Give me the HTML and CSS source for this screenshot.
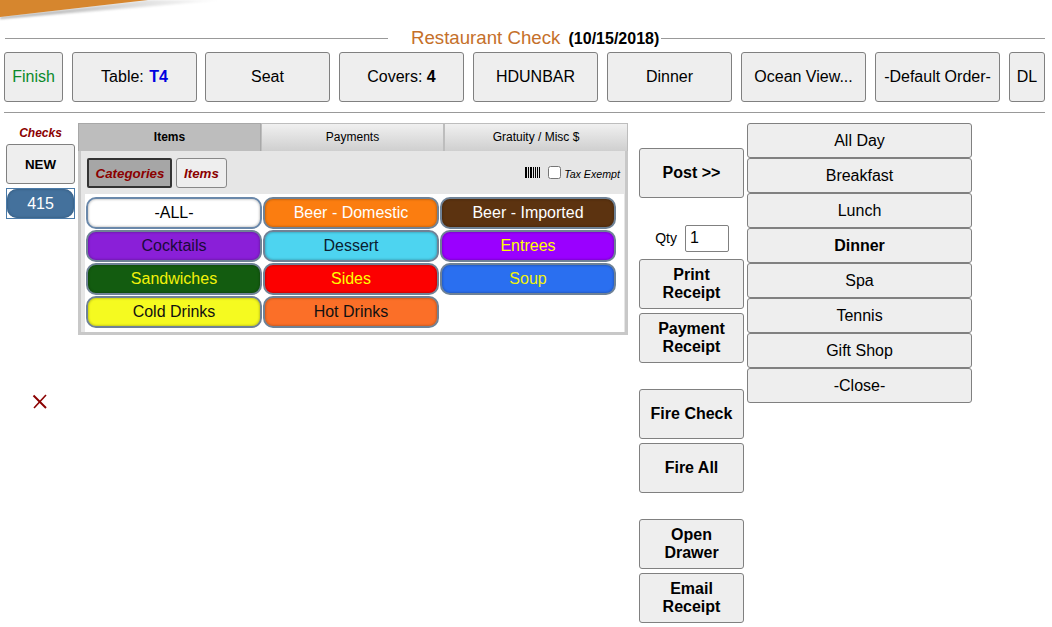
FILE: index.html
```html
<!DOCTYPE html>
<html lang="en">
<head>
<meta charset="utf-8">
<title>Restaurant Check</title>
<link rel="stylesheet" href="styles.css">
</head>
<body>
<svg class="swoosh" width="230" height="22" viewBox="0 0 230 22" aria-hidden="true">
  <defs>
    <filter id="soft" x="-5%" y="-50%" width="110%" height="200%"><feGaussianBlur stdDeviation="1.2"/></filter>
    <linearGradient id="fade" x1="0" x2="1" y1="0" y2="0"><stop offset="0" stop-color="#aaa"/><stop offset="0.6" stop-color="#ddd"/><stop offset="1" stop-color="#fff"/></linearGradient>
  </defs>
  <polygon points="0,17 147,0 225,0 0,19" fill="url(#fade)" filter="url(#soft)"/>
  <polygon points="0,0 148,0 0,17" fill="#d6862e"/>
</svg>
<header class="title-row">
  <span class="rule"></span>
  <h1 class="title">Restaurant Check <b class="date">(10/15/2018)</b></h1>
  <span class="rule rule-right"></span>
</header>
<nav class="toolbar">
  <button class="btn finish">Finish</button>
  <button class="btn wide table-btn">Table: <b class="blue">T4</b></button>
  <button class="btn wide">Seat</button>
  <button class="btn wide">Covers: <b>4</b></button>
  <button class="btn wide">HDUNBAR</button>
  <button class="btn wide">Dinner</button>
  <button class="btn wide">Ocean View...</button>
  <button class="btn wide">-Default Order-</button>
  <button class="btn dl">DL</button>
</nav>
<hr class="divider">
<main class="main">
  <aside class="checks">
    <div class="checks-label">Checks</div>
    <button class="btn new">NEW</button>
    <div class="check-frame"><button class="check-pill">415</button></div>
    <svg class="close-x" width="16" height="16" viewBox="0 0 16 16" aria-hidden="true">
      <path d="M1.5 1.5 L14 14" stroke="#8b0000" stroke-width="2"/>
      <path d="M14 1 L2 14" stroke="#8b0000" stroke-width="1.6"/>
    </svg>
  </aside>
  <section class="panel">
    <div class="tabs">
      <div class="tab active">Items</div>
      <div class="tab">Payments</div>
      <div class="tab">Gratuity / Misc $</div>
    </div>
    <div class="panel-body">
      <div class="filter-row">
        <button class="filter on">Categories</button>
        <button class="filter">Items</button>
        <svg class="barcode" width="15" height="11" viewBox="0 0 15 11" shape-rendering="crispEdges" aria-hidden="true">
          <path d="M0 0h2v11H0zM3 0h1v11H3zM5 0h2v11H5zM8 0h1v11H8zM10 0h1v11h-1zM12 0h1v11h-1zM14 0h1v11h-1z" fill="#000"/>
        </svg>
        <input class="tax-check" type="checkbox" aria-label="Tax Exempt">
        <span class="tax-label">Tax Exempt</span>
      </div>
      <div class="cat-grid">
        <button class="cat c-all">-ALL-</button>
        <button class="cat c-beer">Beer - Domestic</button>
        <button class="cat c-import">Beer - Imported</button>
        <button class="cat c-cock">Cocktails</button>
        <button class="cat c-dess">Dessert</button>
        <button class="cat c-entr">Entrees</button>
        <button class="cat c-sand">Sandwiches</button>
        <button class="cat c-side">Sides</button>
        <button class="cat c-soup">Soup</button>
        <button class="cat c-cold">Cold Drinks</button>
        <button class="cat c-hot">Hot Drinks</button>
      </div>
    </div>
  </section>
  <div class="actions">
    <button class="btn act">Post &gt;&gt;</button>
    <label class="qty">Qty <input class="qty-input" type="text" value="1"></label>
    <button class="btn act">Print<br>Receipt</button>
    <button class="btn act">Payment<br>Receipt</button>
    <button class="btn act gap-top">Fire Check</button>
    <button class="btn act">Fire All</button>
    <button class="btn act gap-top">Open<br>Drawer</button>
    <button class="btn act">Email<br>Receipt</button>
  </div>
  <div class="menus">
    <button class="btn menu">All Day</button>
    <button class="btn menu">Breakfast</button>
    <button class="btn menu">Lunch</button>
    <button class="btn menu"><b>Dinner</b></button>
    <button class="btn menu">Spa</button>
    <button class="btn menu">Tennis</button>
    <button class="btn menu">Gift Shop</button>
    <button class="btn menu">-Close-</button>
  </div>
</main>
</body>
</html>
```

FILE: styles.css
```css
* { box-sizing: border-box; }
html, body { height: 100%; }
body {
  margin: 0;
  overflow: hidden;
  background: #fff;
  color: #000;
  font-family: "Liberation Sans", Arial, sans-serif;
  font-size: 16px;
}
button { font-family: inherit; margin: 0; padding: 0; cursor: pointer; }

.swoosh { position: absolute; left: 0; top: 0; }

.title-row {
  display: flex;
  align-items: center;
  height: 24px;
  margin: 26px 7px 0 5px;
}
.rule { flex: 0 0 383px; height: 1px; background: #999; }
.rule-right { flex: 1 1 auto; margin-left: 2px; }
.title {
  margin: 0 0 0 23px;
  font-size: 18.67px;
  font-weight: 400;
  color: #c5702a;
  white-space: nowrap;
}
.date { margin-left: 3px; font-size: 16px; font-weight: 700; color: #000; }

.btn {
  background: #eee;
  border: 1px solid #808080;
  border-radius: 3px;
  color: #000;
  font-size: 16px;
  text-align: center;
}
.toolbar {
  display: flex;
  gap: 9px;
  margin: 2px 7px 0 4px;
}
.toolbar .btn { height: 50px; }
.finish { flex: 0 0 59px; color: #0a8a2a; }
.wide { flex: 0 0 125px; }
.table-btn { margin-right: -1px; }
.dl { flex: 0 0 36px; }
.blue { color: #0000e0; margin-left: 1px; }

.divider { margin: 10px 7px 0 4px; height: 1px; border: 0; background: #999; }

.main { display: flex; align-items: flex-start; margin-top: 10px; }

.checks { flex: 0 0 69px; margin-left: 6px; position: relative; }
.checks-label {
  margin-top: 4px;
  height: 13px;
  font-size: 12px;
  line-height: 13px;
  font-weight: 700;
  font-style: italic;
  color: #8b0000;
  text-align: center;
}
.new { display: block; width: 69px; height: 40px; margin-top: 4px; font-size: 13.33px; font-weight: 700; }
.check-frame { margin-top: 4px; height: 31px; border: 1px solid #4a7aa8; }
.check-pill {
  display: block;
  width: 100%;
  height: 29px;
  border: 0;
  border-radius: 10px;
  background: #44719c;
  box-shadow: inset 0 0 2px 1px #3a6288;
  color: #fff;
  font-size: 16px;
}
.close-x { position: absolute; left: 26px; top: 271px; }

.panel { flex: 0 0 550px; min-width: 0; margin-left: 3px; }
.tabs { display: flex; height: 28px; }
.tab {
  flex: 0 0 183px;
  border: 1px solid #bdbdbd;
  border-bottom: 0;
  background: linear-gradient(#f0f0f0, #cfcfcf);
  font-size: 12px;
  line-height: 26px;
  text-align: center;
}
.tab:nth-child(3) { flex: 1 1 auto; }
.tab.active { flex: 0 0 183px; background: #bdbdbd; border-color: #a8a8a8; font-weight: 700; }
.panel-body { background: #e6e6e6; border: 3px solid #c8c8c8; border-top: 0; padding: 0 1px 0 4px; height: 184px; }
.filter-row { display: flex; align-items: center; height: 43px; padding: 0 4px 0 2px; }
.filter {
  height: 30px;
  padding: 1px 7px 0;
  margin-right: 4px;
  background: #eee;
  border: 1px solid #888;
  border-radius: 3px;
  font-size: 13.33px;
  font-weight: 700;
  font-style: italic;
  color: #8b0000;
}
.filter.on { width: 85px; padding: 1px 0 0 1px; background: #a6a6a6; border: 2px solid #333; border-radius: 2px; }
.barcode { margin: -1px 8px 0 auto; }
.tax-check { width: 13px; height: 13px; margin: 0 3px 0 0; }
.tax-label { padding-top: 2px; font-size: 10.67px; font-style: italic; }

.cat-grid {
  display: grid;
  grid-template-columns: repeat(3, 176px);
  grid-auto-rows: 32px;
  gap: 1px;
  padding: 3px 0 3px 1px;
  background: #fff;
  height: 138px;
}
.cat {
  border: 2px solid #6f8296;
  border-radius: 10px;
  box-shadow: inset 0 0 2px 1px rgba(0, 0, 0, 0.18);
  font-size: 16px;
}
.c-all { background: #fff; color: #000; border-color: #6a88aa; }
.c-beer { background: #fb7d10; color: #fff; }
.c-import { background: #5c3310; color: #fff; }
.c-cock { background: #8a1fd8; color: #1a0a3a; }
.c-dess { background: #4dd4f0; color: #0a2030; }
.c-entr { background: #9a00ff; color: #ff0; }
.c-sand { background: #135c10; color: #f2f20a; }
.c-side { background: #fc0000; color: #ff0; }
.c-soup { background: #2a6ff0; color: #f2f20a; }
.c-cold { background: #f5fa20; color: #111; }
.c-hot { background: #fb6f28; color: #111; }

.actions {
  flex: 0 0 105px;
  margin-left: 11px;
  padding-top: 25px;
  display: flex;
  flex-direction: column;
  gap: 4px;
}
.act { height: 50px; font-weight: 700; line-height: 18px; }
.gap-top { margin-top: 22px; }
.qty {
  display: flex;
  align-items: center;
  justify-content: flex-end;
  gap: 8px;
  height: 28px;
  margin: 22px 15px 3px 0;
  font-size: 14px;
}
.qty-input {
  width: 44px;
  height: 27px;
  padding: 0 4px;
  border: 1px solid #808080;
  border-radius: 2px;
  font: 16px "Liberation Sans", Arial, sans-serif;
}

.menus { flex: 0 0 225px; margin-left: 3px; display: flex; flex-direction: column; }
.menu { height: 35px; }
```
